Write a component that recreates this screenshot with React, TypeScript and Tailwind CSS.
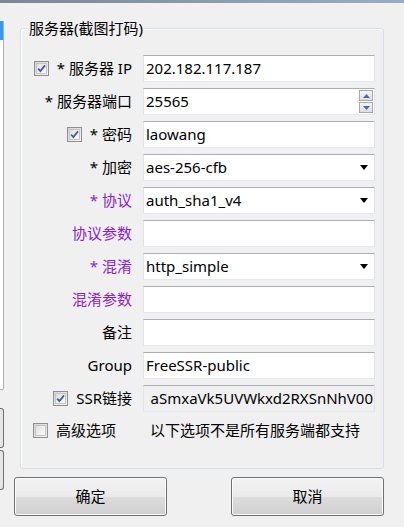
import React from "react";

const FONT = '"Noto Sans", "Noto Sans CJK SC", sans-serif';

type Kind = "text" | "spin" | "select" | "link";

interface Row {
  label: string;
  value?: string;
  kind?: Kind;
  purple?: boolean;
  check?: boolean;
}

const ROWS: Row[] = [
  { label: "* 服务器 IP", value: "202.182.117.187", check: true },
  { label: "* 服务器端口", value: "25565", kind: "spin" },
  { label: "* 密码", value: "laowang", check: true },
  { label: "* 加密", value: "aes-256-cfb", kind: "select" },
  { label: "* 协议", value: "auth_sha1_v4", kind: "select", purple: true },
  { label: "协议参数", purple: true },
  { label: "* 混淆", value: "http_simple", kind: "select", purple: true },
  { label: "混淆参数", purple: true },
  { label: "备注" },
  { label: "Group", value: "FreeSSR-public" },
  { label: "SSR链接", value: "aSmxaVk5UVWkxd2RXSnNhV00", kind: "link", check: true },
];

function CheckBox({ checked }: { checked: boolean }) {
  return (
    <div className="w-[15px] h-[15px] shrink-0 border border-[#8e8f8f] bg-[linear-gradient(135deg,#d6d6d6,#f6f6f6)] p-[1px]">
      <div className="w-full h-full border border-[#c4c4c4] bg-[linear-gradient(135deg,#e0e0e0,#fbfbfb)] flex items-center justify-center">
        {checked && (
          <svg width="13" height="13" viewBox="0 0 13 13" className="-m-[1px]">
            <path d="M2.6 6.6 L5.2 9.6 L10.6 2.8" fill="none" stroke="#3f5a9e" strokeWidth="2" />
          </svg>
        )}
      </div>
    </div>
  );
}

function SpinButtons() {
  return (
    <div className="flex flex-col gap-[1px] mr-[1px]">
      {[0, 1].map((i) => (
        <div
          key={i}
          className="w-[14px] h-[11px] border border-[#a7a7a7] bg-[linear-gradient(#f4f4f4,#dedede)] flex items-center justify-center"
        >
          <svg width="7" height="4" viewBox="0 0 7 4">
            <path d={i === 0 ? "M0 4 L3.5 0 L7 4 Z" : "M0 0 L7 0 L3.5 4 Z"} fill="#4d6a9e" />
          </svg>
        </div>
      ))}
    </div>
  );
}

function Field({ row }: { row: Row }) {
  const kind = row.kind ?? "text";
  const bg = kind === "link" ? "bg-[#f0f0f0]" : "bg-white";
  return (
    <div
      className={`w-[232px] h-[27px] border border-[#e2e3ea] border-t-[#abadb3] border-b-[#e3e9ef] ${bg} flex items-center overflow-hidden`}
    >
      {kind === "link" ? (
        <span className="flex-1 min-w-0 text-right whitespace-nowrap overflow-hidden pr-[1px]">{row.value}</span>
      ) : (
        <span className="flex-1 pl-[2px] whitespace-nowrap">{row.value}</span>
      )}
      {kind === "spin" && <SpinButtons />}
      {kind === "select" && (
        <svg width="8" height="5" viewBox="0 0 8 5" className="mr-[6px]">
          <path d="M0 0 L8 0 L4 5 Z" fill="#000" />
        </svg>
      )}
    </div>
  );
}

function WinButton({ label }: { label: string }) {
  return (
    <button className="w-[153px] h-[39px] rounded-[3px] border border-[#707070] bg-[linear-gradient(#f2f2f2_0%,#ebebeb_50%,#dddddd_50%,#cfcfcf_100%)] shadow-[inset_0_0_0_1px_#fcfcfc] text-[15px] text-black">
      {label}
    </button>
  );
}

export default function App() {
  return (
    <div
      className="w-[404px] h-[527px] bg-[#f0f0f0] overflow-hidden text-[15px] text-black"
      style={{ fontFamily: FONT }}
    >
      <div className="h-[3px] bg-[linear-gradient(90deg,#7d8794,#9aacc2)]" />
      <div className="flex">
        {/* edges of the window on the left */}
        <div className="w-[4px] shrink-0 flex flex-col">
          <div className="mt-[18px] h-[369px] bg-white border-r border-b border-[#abadb3] rounded-br-[2px]">
            <div className="w-[3px] h-[19px] bg-[#3399ff]" />
          </div>
          <div className="mt-[18px] h-[40px] border-r border-y border-[#707070] rounded-r-[3px] bg-[#e6e6e6]" />
          <div className="mt-[2px] h-[40px] border-r border-y border-[#707070] rounded-r-[3px] bg-[#e6e6e6]" />
        </div>

        <div className="flex flex-col">
          {/* group box */}
          <div className="ml-[16px] mt-[25px] w-[364px] border border-[#d5dfe5] rounded-[3px] shadow-[inset_1px_1px_0_#ffffff] pb-[30px]">
            <div className="-mt-[9px] ml-[7px] px-[1px] w-fit bg-[#f0f0f0] leading-[16px]">服务器(截图打码)</div>

            <div className="pt-[19px] flex flex-col gap-[6px]">
              {ROWS.map((row) => (
                <div key={row.label} className="flex items-center h-[27px]">
                  <div
                    className={`w-[111px] flex items-center justify-end gap-[8px] ${
                      row.purple ? "text-[#8a1fd0]" : "text-black"
                    }`}
                  >
                    {row.check && <CheckBox checked />}
                    <span className="whitespace-nowrap">{row.label}</span>
                  </div>
                  <div className="ml-[11px]">
                    <Field row={row} />
                  </div>
                </div>
              ))}
            </div>

            <div className="mt-[10px] h-[16px] flex items-center">
              <div className="ml-[12px]">
                <CheckBox checked={false} />
              </div>
              <span className="ml-[8px] w-[94px] whitespace-nowrap">高级选项</span>
              <span className="whitespace-nowrap">以下选项不是所有服务端都支持</span>
            </div>
          </div>

          {/* buttons */}
          <div className="ml-[10px] mt-[8px] w-[370px] flex justify-between">
            <WinButton label="确定" />
            <WinButton label="取消" />
          </div>
        </div>
      </div>
    </div>
  );
}
